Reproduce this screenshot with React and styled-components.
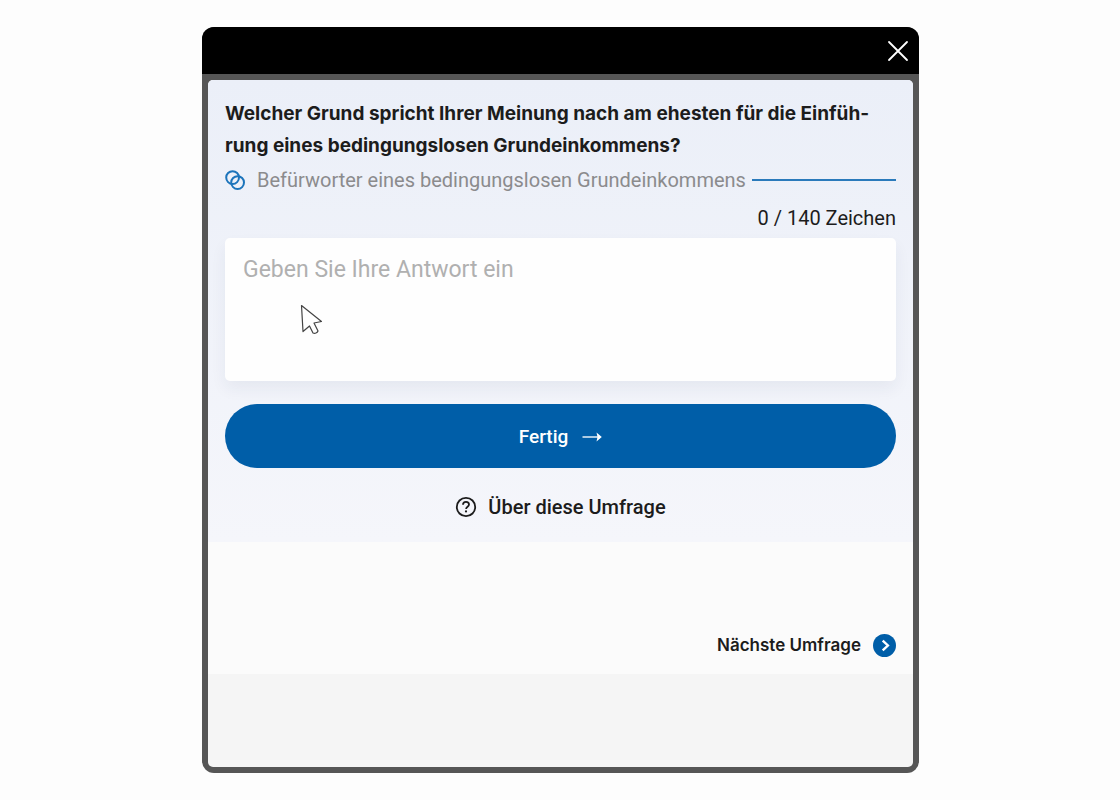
import { useState } from 'react'
import styled, { createGlobalStyle } from 'styled-components'

const MAX_LENGTH = 140

const GlobalStyle = createGlobalStyle`
  * {
    box-sizing: border-box;
  }

  body {
    margin: 0;
    background: #fdfdfd;
    color: #1c1c1c;
    font-family: Roboto, sans-serif;
  }

  button, textarea {
    font-family: inherit;
  }
`

const Page = styled.main`
  display: flex;
  min-height: 100vh;
  padding: 27px 201px 27px 202px;

  @media (max-width: 900px) {
    padding: 27px 16px;
  }
`

const Modal = styled.section`
  display: flex;
  flex: 1;
  flex-direction: column;
  border-radius: 12px;
  background: #565656;
  overflow: hidden;
`

const TitleBar = styled.header`
  display: flex;
  align-items: center;
  justify-content: flex-end;
  height: 47px;
  padding: 0 10px;
  background: #000;
`

const CloseButton = styled.button`
  display: flex;
  padding: 0;
  border: 0;
  background: none;
  color: #fff;
  cursor: pointer;
`

const Content = styled.div`
  display: flex;
  flex: 1;
  flex-direction: column;
  margin: 6px;
  border-radius: 5px;
  background: #f5f5f5;
  overflow: hidden;
`

const Survey = styled.form`
  display: flex;
  flex-direction: column;
  padding: 18px 17px 17px;
  background: linear-gradient(#ebeff8, #f5f6fb);
`

const Question = styled.h1`
  margin: 0;
  font-family: Inter, sans-serif;
  font-size: 19px;
  font-weight: 700;
  line-height: 32px;
`

const Group = styled.div`
  display: flex;
  align-items: center;
  gap: 6px;
  color: #8b8b8d;
  font-size: 20px;
  line-height: 36px;

  svg {
    flex: none;
    margin-right: 6px;
  }
`

const Line = styled.span`
  flex: 1;
  height: 2px;
  background: #2a7abb;
`

const Counter = styled.label`
  align-self: flex-end;
  font-size: 20px;
  line-height: 40px;
`

const AnswerBox = styled.div`
  position: relative;
  display: flex;
`

const Answer = styled.textarea`
  flex: 1;
  height: 143px;
  padding: 18px;
  border: 0;
  border-radius: 5px;
  background: #fefefe;
  box-shadow: 0 8px 16px rgba(40, 50, 80, 0.06);
  color: #1c1c1c;
  font-size: 23px;
  line-height: 28px;
  resize: none;

  &::placeholder {
    color: #b0b0b0;
    opacity: 1;
  }
`

const Pointer = styled.svg`
  position: absolute;
  top: 66px;
  left: 75px;
  pointer-events: none;
`

const SubmitButton = styled.button`
  display: flex;
  align-items: center;
  justify-content: center;
  gap: 14px;
  height: 64px;
  margin: 23px 0 21px;
  border: 0;
  border-radius: 32px;
  background: #005ea8;
  color: #fff;
  font-size: 19px;
  font-weight: 500;
  cursor: pointer;
`

const AboutLink = styled.a`
  display: flex;
  align-items: center;
  align-self: center;
  gap: 11px;
  color: inherit;
  font-size: 20px;
  font-weight: 500;
  line-height: 36px;
  text-decoration: none;
`

const NextBar = styled.nav`
  display: flex;
  justify-content: flex-end;
  padding: 87px 17px 13px;
  background: #fbfbfb;
`

const NextLink = styled.a`
  display: flex;
  align-items: center;
  gap: 12px;
  color: inherit;
  font-family: Inter, sans-serif;
  font-size: 17px;
  font-weight: 600;
  line-height: 32px;
  text-decoration: none;
`

const CloseIcon = () => (
  <svg width="22" height="22" viewBox="0 0 22 22" fill="none" stroke="currentColor" strokeWidth="1.8" strokeLinecap="round">
    <path d="M2 2l18 18M20 2L2 20" />
  </svg>
)

const RingsIcon = () => (
  <svg width="20" height="20" viewBox="0 0 20 20" fill="none" stroke="#1c74bb" strokeWidth="2">
    <circle cx="7.6" cy="7.6" r="6.4" />
    <circle cx="12.6" cy="12.6" r="6.4" />
  </svg>
)

const ArrowIcon = () => (
  <svg width="20" height="12" viewBox="0 0 20 12" fill="none">
    <path d="M.5 7H16" stroke="currentColor" strokeWidth="1.6" opacity="0.85" />
    <path d="M14.500 2.500L19.800 7l-5.300 4.500 1-4.500z" fill="currentColor" />
  </svg>
)

const HelpIcon = () => (
  <svg width="22" height="22" viewBox="0 0 22 22" fill="none" stroke="currentColor" strokeWidth="1.8">
    <circle cx="11" cy="11" r="9.2" />
    <path d="M8 8.700c0-1.800 1.200-2.900 3-2.900s3 1.100 3 2.700c0 2.200-2.900 2.300-2.900 4.500" />
    <circle cx="11" cy="15.4" r="1.1" fill="currentColor" stroke="none" />
  </svg>
)

const NextIcon = () => (
  <svg width="23" height="23" viewBox="0 0 23 23" fill="none">
    <circle cx="11.5" cy="11.5" r="11.5" fill="#005ea8" />
    <path d="M9.7 6.600l5.200 4.900-5.200 4.900" stroke="#fff" strokeWidth="2.4" />
  </svg>
)

export default function App() {
  const [answer, setAnswer] = useState('')
  const [open, setOpen] = useState(true)

  return (
    <Page>
      <GlobalStyle />
      {open && (
        <Modal>
          <TitleBar>
            <CloseButton type="button" aria-label="Schließen" onClick={() => setOpen(false)}>
              <CloseIcon />
            </CloseButton>
          </TitleBar>
          <Content>
            <Survey onSubmit={(e) => e.preventDefault()}>
              <Question>
                Welcher Grund spricht Ihrer Meinung nach am ehesten für die Einfüh-
                <br />
                rung eines bedingungslosen Grundeinkommens?
              </Question>
              <Group>
                <RingsIcon />
                Befürworter eines bedingungslosen Grundeinkommens
                <Line />
              </Group>
              <Counter htmlFor="answer">
                {answer.length} / {MAX_LENGTH} Zeichen
              </Counter>
              <AnswerBox>
                <Answer
                  id="answer"
                  maxLength={MAX_LENGTH}
                  placeholder="Geben Sie Ihre Antwort ein"
                  value={answer}
                  onChange={(e) => setAnswer(e.target.value)}
                />
                <Pointer width="24" height="32" viewBox="0 0 24 32" fill="#fff" stroke="#444" strokeWidth="1.2">
                  <path d="M1.5 1.5L21.5 17.500l-7.500 1.500 4 8c-0.800 2-3 2.800-5 2L9.500 22 3 27.500z" strokeLinejoin="round" />
                </Pointer>
              </AnswerBox>
              <SubmitButton type="submit">
                Fertig
                <ArrowIcon />
              </SubmitButton>
              <AboutLink href="#about">
                <HelpIcon />
                Über diese Umfrage
              </AboutLink>
            </Survey>
            <NextBar>
              <NextLink href="#next">
                Nächste Umfrage
                <NextIcon />
              </NextLink>
            </NextBar>
          </Content>
        </Modal>
      )}
    </Page>
  )
}
